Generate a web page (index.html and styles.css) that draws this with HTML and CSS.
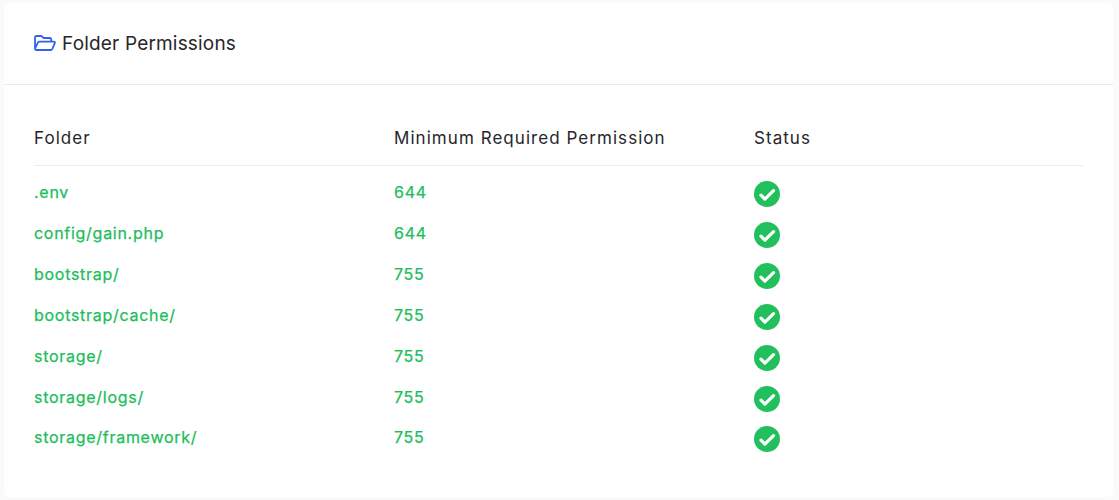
FILE: index.html
```html
<!DOCTYPE html>
<html lang="en">
<head>
<meta charset="utf-8">
<title>Folder Permissions</title>
<link rel="stylesheet" href="styles.css">
</head>
<body>
<section class="card">
  <header class="card-header">
    <svg class="folder-icon" viewBox="0 0 22 16" aria-hidden="true"><path d="M1 13.600V2.600C1 1.700 1.700 1 2.600 1h4.200c.5 0 .9.200 1.200.5L9.600 3h6c.9 0 1.600.7 1.600 1.600V6.600M1 13.600l3-6.200c.3-.5.8-.8 1.400-.8h14.400c.8 0 1.400.8 1 1.500l-2.600 6c-.3.600-.8.900-1.400.9H2.400C1.600 15 1 14.400 1 13.600z" fill="none" stroke="#2f62ee" stroke-width="1.800" stroke-linejoin="round" stroke-linecap="round"/></svg>
    <h2 class="card-title">Folder Permissions</h2>
  </header>
  <div class="card-body">
    <div class="table">
      <div class="row head"><span>Folder</span><span>Minimum Required Permission</span><span>Status</span></div>
      <div class="row item"><span>.env</span><span>644</span><span class="status"><svg viewBox="0 0 26 26"><circle cx="13" cy="13" r="13" fill="#22c05d"/><path d="M7 14.200l3.900 3.900 8.600-8.400" fill="none" stroke="#fff" stroke-width="3.200" stroke-linecap="round" stroke-linejoin="round"/></svg></span></div>
      <div class="row item"><span>config/gain.php</span><span>644</span><span class="status"><svg viewBox="0 0 26 26"><circle cx="13" cy="13" r="13" fill="#22c05d"/><path d="M7 14.200l3.900 3.900 8.600-8.400" fill="none" stroke="#fff" stroke-width="3.200" stroke-linecap="round" stroke-linejoin="round"/></svg></span></div>
      <div class="row item"><span>bootstrap/</span><span>755</span><span class="status"><svg viewBox="0 0 26 26"><circle cx="13" cy="13" r="13" fill="#22c05d"/><path d="M7 14.200l3.900 3.900 8.600-8.400" fill="none" stroke="#fff" stroke-width="3.200" stroke-linecap="round" stroke-linejoin="round"/></svg></span></div>
      <div class="row item"><span>bootstrap/cache/</span><span>755</span><span class="status"><svg viewBox="0 0 26 26"><circle cx="13" cy="13" r="13" fill="#22c05d"/><path d="M7 14.200l3.900 3.900 8.600-8.400" fill="none" stroke="#fff" stroke-width="3.200" stroke-linecap="round" stroke-linejoin="round"/></svg></span></div>
      <div class="row item"><span>storage/</span><span>755</span><span class="status"><svg viewBox="0 0 26 26"><circle cx="13" cy="13" r="13" fill="#22c05d"/><path d="M7 14.200l3.900 3.900 8.600-8.400" fill="none" stroke="#fff" stroke-width="3.200" stroke-linecap="round" stroke-linejoin="round"/></svg></span></div>
      <div class="row item"><span>storage/logs/</span><span>755</span><span class="status"><svg viewBox="0 0 26 26"><circle cx="13" cy="13" r="13" fill="#22c05d"/><path d="M7 14.200l3.900 3.900 8.600-8.400" fill="none" stroke="#fff" stroke-width="3.200" stroke-linecap="round" stroke-linejoin="round"/></svg></span></div>
      <div class="row item"><span>storage/framework/</span><span>755</span><span class="status"><svg viewBox="0 0 26 26"><circle cx="13" cy="13" r="13" fill="#22c05d"/><path d="M7 14.200l3.900 3.900 8.600-8.400" fill="none" stroke="#fff" stroke-width="3.200" stroke-linecap="round" stroke-linejoin="round"/></svg></span></div>
    </div>
  </div>
</section>
</body>
</html>
```
FILE: styles.css
```css
html, body { margin: 0; height: 500px; overflow: hidden; }
body { background: #fafafb; padding: 3px 6px 3px 4px; box-sizing: border-box; font-family: Inter, "Noto Sans", sans-serif; }
.card { background: #fff; border-radius: 5px; height: 494px; box-sizing: border-box; }
.card-header { display: flex; align-items: center; gap: 6px; height: 82px; box-sizing: border-box; padding: 0 30px; border-bottom: 1px solid #e8ebf1; }
.folder-icon { width: 22px; height: 16px; flex: none; margin-top: -1px; }
.card-title { margin: 0; font-size: 19px; font-weight: 400; color: #26262b; letter-spacing: .18px; }
.card-body { padding: 0 30px; }
.table { width: 1049px; }
.row { display: grid; grid-template-columns: 360px 360px 1fr; }
.head { height: 81px; padding-top: 25px; align-items: center; box-sizing: border-box; border-bottom: 1px solid #ededf0; font-size: 17px; color: #26262b; letter-spacing: 1.05px; }
.item { height: 40.91px; align-items: start; font-size: 16px; font-weight: 400; color: #20bd5a; letter-spacing: .72px; -webkit-text-stroke: .25px #20bd5a; }
.item > span { line-height: 22px; }
.head + .item { margin-top: 15px; }
.status { display: block; }
.status svg { display: block; width: 26px; height: 26px; }
```
